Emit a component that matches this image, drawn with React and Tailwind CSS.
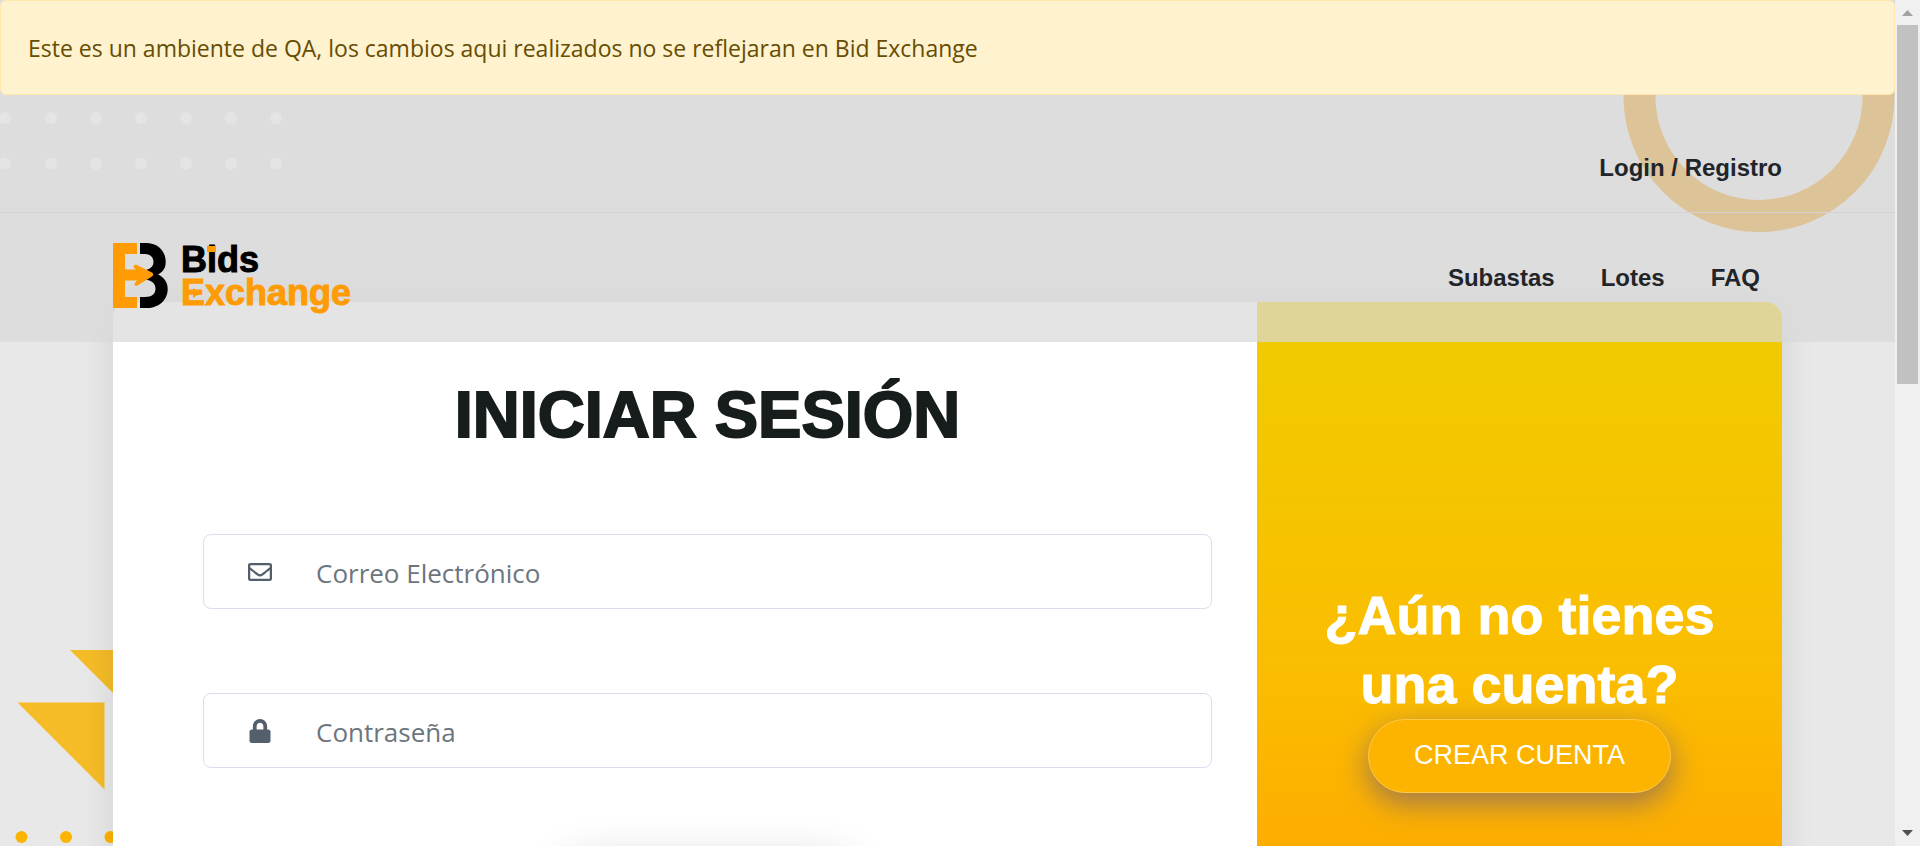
import { FaRegEnvelope, FaLock } from "react-icons/fa";

const COLUMNS = [5, 51, 96, 141, 186, 231, 276];

function Decorations() {
  return (
    <>
      <svg className="absolute left-0 top-0" width="300" height="180" aria-hidden="true">
        {[118, 163.5].map((y) =>
          COLUMNS.map((x) => <circle key={`${x}-${y}`} cx={x} cy={y} r="6" fill="#fff" />)
        )}
      </svg>
      <svg className="absolute right-0 top-0" width="272" height="234" aria-hidden="true">
        <circle cx="136" cy="96.5" r="119.5" fill="none" stroke="#e69200" strokeWidth="32" />
      </svg>
      <svg className="absolute left-0 top-[640px]" width="180" height="210" aria-hidden="true">
        <path d="M70 10H157V97Z M17.5 62.5H104.5V149.5Z" fill="#f5bc27" />
        {[21.5, 66, 110.5].map((x) => (
          <circle key={x} cx={x} cy="197" r="6" fill="#fcb400" />
        ))}
      </svg>
    </>
  );
}

function Logo() {
  return (
    <span className="flex items-start gap-3">
      <svg width="56" height="65" viewBox="0 0 56 65" aria-hidden="true">
        <path
          d="M27 0H33C45 0 52.700 8 52.700 19C52.700 25 50 29 45 31.500C51 34 54.700 39.500 54.700 46C54.700 57 46 65 34 65H27V54H32C39 54 42.500 51 42.500 45.500C42.500 41 39 37.500 34 37L33 27C37 26 40.500 23.500 40.500 19C40.500 14 37 11 32 11H27Z"
          fill="#000"
        />
        <path
          d="M0 0H24V11H12V26.500H23L20.500 24.500C20.500 21.500 22 21.500 24 22L39 29.500Q41.500 31.500 39 33.500L24.500 42.500C21.500 43.500 21 42 22 40L24 37.500H12V54H24V65H0Z"
          fill="#ff9b05"
        />
      </svg>
      <span className="text-4xl font-bold leading-[33px] [-webkit-text-stroke:1px]">
        <span className="relative block text-black">
          Bids
          <span className="absolute left-[26px] top-[3px] h-[6px] w-[9px] bg-[#ff9b05]" />
        </span>
        <span className="relative block text-[#ff9b05]">
          Exchange
          <svg className="absolute left-[11px] top-[11px]" width="10" height="12" aria-hidden="true">
            <path d="M1 1L9 6L1 11Z" fill="#ff9b05" />
          </svg>
        </span>
      </span>
    </span>
  );
}

function Header() {
  return (
    <header className="absolute inset-x-0 top-0 z-10 bg-[#d9d9d9]/70">
      <div
        role="alert"
        className="rounded-md border border-[#ffe8ae] bg-[#fff2cf] px-[27px] pb-7 pt-[30px] font-['Open_Sans',sans-serif] text-[23px] font-normal leading-[35px] text-[#664d03]"
      >
        Este es un ambiente de QA, los cambios aqui realizados no se reflejaran en Bid Exchange
      </div>
      <div className="flex justify-end border-b border-[#d3d3d3] px-[113px] pb-[26px] pt-[55px]">
        <a href="#login" className="leading-9">Login / Registro</a>
      </div>
      <div className="flex items-start justify-between px-[113px] pb-[33px] pt-[30px]">
        <a href="#inicio"><Logo /></a>
        <nav className="mt-[17px] flex gap-[46px] pr-[22px] leading-9">
          <a href="#subastas">Subastas</a>
          <a href="#lotes">Lotes</a>
          <a href="#faq">FAQ</a>
        </nav>
      </div>
    </header>
  );
}

function Field({ id, label, type, icon: Icon }) {
  return (
    <div className="flex h-[75px] items-center rounded-lg border border-[#dedcf1] bg-white pl-11">
      <label htmlFor={id} className="w-[68px] shrink-0" aria-label={label}>
        <Icon className="h-6 w-auto" color="#535f6b" />
      </label>
      <input
        id={id}
        type={type}
        placeholder={label}
        className="h-full min-w-0 flex-1 bg-transparent pt-0.5 font-['Open_Sans',sans-serif] text-[26px] outline-none placeholder:text-[#6c757d]"
      />
    </div>
  );
}

function Scrollbar() {
  return (
    <div className="flex w-[25px] shrink-0 flex-col items-center justify-between bg-[#f0f0f0]" aria-hidden="true">
      <div className="flex w-full flex-1 flex-col items-center">
        <svg width="25" height="25"><path d="M7 16L12.500 10L18 16Z" fill="#a3a3a3" /></svg>
        <div className="h-[359px] w-[21px] bg-[#c1c1c1]" />
      </div>
      <svg width="25" height="25"><path d="M7 9H18L12.500 15Z" fill="#505050" /></svg>
    </div>
  );
}

export default function App() {
  return (
    <div className="flex h-screen overflow-hidden bg-[#e8e8e8] font-['Liberation_Sans',Arial,sans-serif]">
      <div className="relative min-w-0 flex-1 overflow-hidden text-2xl font-bold text-[#212529]">
        <Decorations />
        <Header />
        <main className="px-[113px] pt-[302px]">
          <div className="relative grid grid-cols-[1fr_525px] overflow-hidden rounded-2xl bg-white shadow-[0_0_35px_rgba(0,0,0,0.1)]">
            <form className="flex flex-col pb-[136px] pl-[90px] pr-[45px] pt-[74px]">
              <h1 className="text-center text-[65px] leading-[77px] text-[#171d1c] [-webkit-text-stroke:2px]">INICIAR SESIÓN</h1>
              <div className="mt-[81px] flex flex-col gap-[84px] font-normal">
                <Field id="correo" label="Correo Electrónico" type="email" icon={FaRegEnvelope} />
                <Field id="clave" label="Contraseña" type="password" icon={FaLock} />
              </div>
              <button
                type="submit"
                aria-label="Ingresar"
                className="mt-[92px] h-[75px] w-[303px] self-center rounded-full bg-[#fcb400] shadow-[0_0_45px_rgba(0,0,0,0.18)]"
              />
            </form>
            <section className="flex flex-col items-center justify-center bg-linear-to-b from-[#efcd00] via-[#fbbc00] to-[#ff9700] px-12 text-center text-white">
              <h2 className="text-[54px] leading-[69px] [-webkit-text-stroke:1px]">¿Aún no tienes una cuenta?</h2>
              <button
                type="button"
                className="h-[74px] rounded-full border border-[#ffc946] bg-[#fcb400] px-[45px] text-[27px] font-normal shadow-[0_10px_30px_rgba(93,81,134,0.6)]"
              >
                CREAR CUENTA
              </button>
            </section>
          </div>
        </main>
      </div>
      <Scrollbar />
    </div>
  );
}
